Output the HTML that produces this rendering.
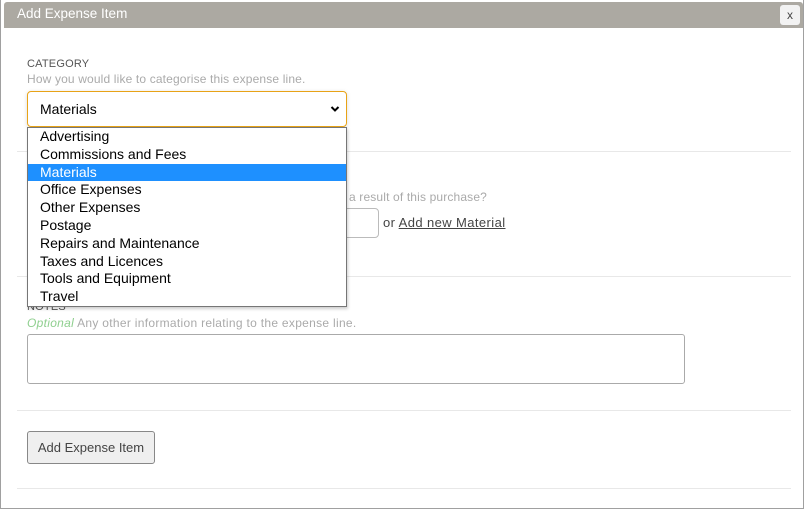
<!DOCTYPE html>
<html><head><style>
*{box-sizing:border-box;margin:0;padding:0}
body{width:805px;height:509px;background:#fff;position:relative;overflow:hidden;font-family:"Liberation Sans",sans-serif}
.a{position:absolute}
.hr{position:absolute;left:17px;width:774px;height:1px;background:#e8e8e8}
.lbl{font-size:11px;color:#555;letter-spacing:.2px}
.hint{font-size:12px;color:#aaa;letter-spacing:.15px}
.dd div{height:17.8px;line-height:17.8px;padding-left:12px;font-size:14px;color:#000}
</style></head><body>
<div class="a" style="left:0;top:0;width:804px;height:509px;border:1px solid #a0a0a0;border-top:none"></div>
<div class="a" style="left:4px;top:2px;width:799px;height:26px;background:#aca9a2;border-radius:3px 3px 0 0"></div>
<div class="a" style="left:17px;top:6px;font-size:13.5px;color:#fff">Add Expense Item</div>
<div class="a" style="left:780px;top:5px;width:20px;height:20px;background:#f2f2f2;border-radius:3px;font-size:12px;color:#444;text-align:center;line-height:20px">x</div>

<div class="a lbl" style="left:27px;top:58px">CATEGORY</div>
<div class="a hint" style="left:27px;top:72px">How you would like to categorise this expense line.</div>
<div class="a" style="left:27px;top:91px;width:320px;height:36px;border:1.5px solid #e8a317;border-radius:4px;box-shadow:0 1px 4px rgba(0,0,0,.15)"></div>
<div class="a" style="left:40px;top:101px;font-size:14px;color:#000">Materials</div>
<svg class="a" style="left:330px;top:104px" width="10" height="10" viewBox="0 0 10 10"><path d="M1.5 3 L5 6.5 L8.5 3" stroke="#000" stroke-width="2" fill="none"/></svg>

<div class="hr" style="top:151px"></div>
<div class="a hint" style="left:349px;top:190px">a result of this purchase?</div>
<div class="a" style="left:330px;top:208px;width:49px;height:30px;border:1px solid #bbb;border-radius:4px"></div>
<div class="a" style="left:383px;top:215px;font-size:13px;color:#444;letter-spacing:.4px">or <span style="text-decoration:underline">Add new Material</span></div>
<div class="hr" style="top:276px"></div>

<div class="a lbl" style="left:27px;top:301px">NOTES</div>
<div class="a hint" style="left:27px;top:316px;letter-spacing:.3px"><i style="color:#8fcf8f">Optional</i> Any other information relating to the expense line.</div>
<div class="a" style="left:27px;top:334px;width:658px;height:50px;border:1px solid #aaa;border-radius:3px"></div>
<div class="hr" style="top:410px"></div>
<div class="a" style="left:27px;top:431px;width:128px;height:33px;border:1px solid #888;border-radius:3px;background:#efefef;font-size:13px;color:#444;text-align:center;line-height:31px">Add Expense Item</div>
<div class="hr" style="top:488px"></div>

<div class="a dd" style="left:27px;top:127px;width:320px;height:180px;border:1px solid #767676;background:#fff;box-shadow:1px 2px 3px rgba(0,0,0,.2)">
<div>Advertising</div><div>Commissions and Fees</div><div style="background:#1e90ff;color:#fff">Materials</div><div>Office Expenses</div><div>Other Expenses</div><div>Postage</div><div>Repairs and Maintenance</div><div>Taxes and Licences</div><div>Tools and Equipment</div><div>Travel</div>
</div>
</body></html>
